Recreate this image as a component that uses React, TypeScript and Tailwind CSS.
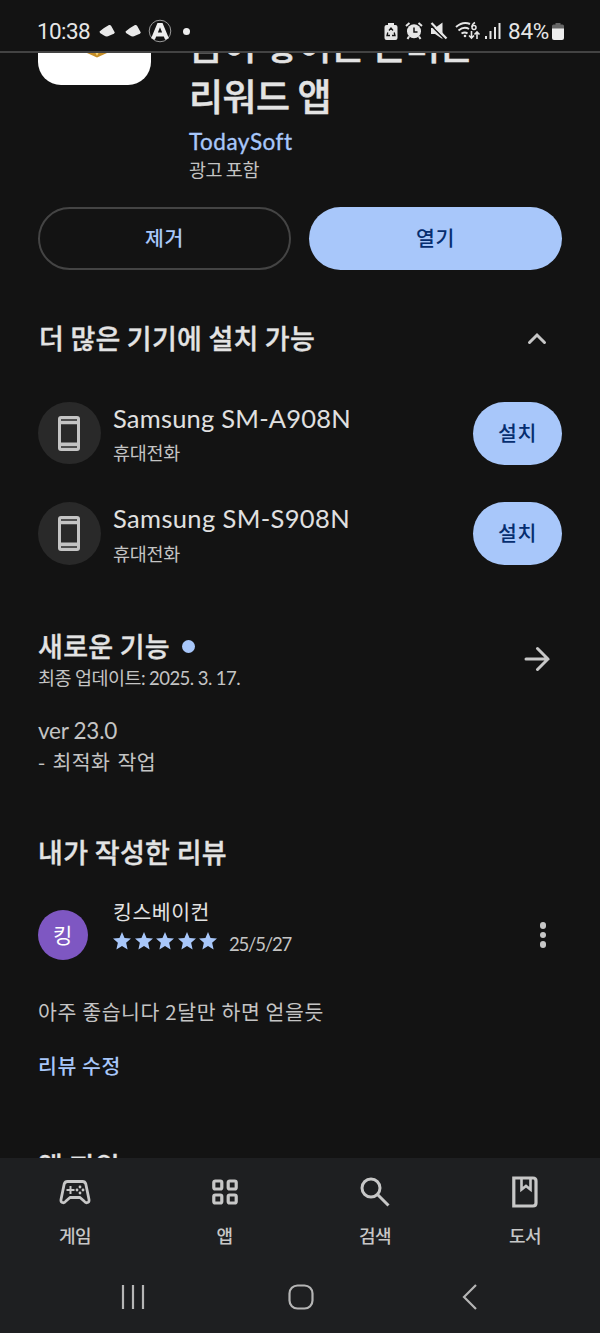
import React from "react";

const KR = "font-['Noto_Sans_CJK_KR',sans-serif]";
const LATIN = "font-['Lato','Noto_Sans_CJK_KR',sans-serif]";
const STATUS = "font-['Roboto',sans-serif] text-[22.5px] text-[#e6e6e6]";
const TITLE = `${KR} text-[37px] font-medium text-[#e3e3e3] [-webkit-text-stroke:0.5px_#e3e3e3]`;
const HEADING = `${KR} text-[27px] font-medium text-[#e3e3e3] [-webkit-text-stroke:0.35px_#e3e3e3]`;
const SMALL = `${KR} text-[18.5px] text-[#c4c4c4]`;
const BODY = `${KR} text-[20.5px] text-[#c4c4c4]`;
const LINK = `${KR} text-[20.5px] font-medium text-[#a8c7fa]`;
const ON_BLUE = `${KR} text-[20.5px] font-medium text-[#062e6f]`;

/* Text tracked so that its line takes exactly w pixels */
function Fit({ w, className, children }: { w: number; className: string; children: string }) {
  const ref = React.useRef<HTMLSpanElement>(null);
  React.useLayoutEffect(() => {
    const el = ref.current;
    if (!el) return;
    el.style.letterSpacing = "0px";
    const natural = el.getBoundingClientRect().width;
    el.style.letterSpacing = `${(w - natural) / children.length}px`;
  }, [w, children]);
  return <span ref={ref} className={`inline-block whitespace-pre leading-none ${className}`}>{children}</span>;
}

function Line({ children, className }: { children: React.ReactNode; className: string }) {
  return <div className={`flex shrink-0 items-center whitespace-nowrap ${className}`}>{children}</div>;
}

function Cloud({ className }: { className: string }) {
  return (
    <svg className={className} width="17" height="14" viewBox="0 0 17 14" fill="#e9e9e9">
      <path d="M0.500 7.500L5 4L10 1Q12 0.500 12.800 3L15.800 8.500Q15.500 9.800 13 10.500L9 12.300Q7 12.800 5 11.500L1 9Z" />
    </svg>
  );
}

function StatusBar() {
  return (
    <header className="flex h-[53px] shrink-0 items-start border-b-2 border-[#434343] pl-[37px] pr-[35px] pt-[15px]">
      <div className="flex h-8 items-center">
        <Fit w={53} className={STATUS}>10:38</Fit>
        <Cloud className="ml-[9px]" />
        <Cloud className="ml-[9px]" />
        <svg className="ml-[6px]" width="24" height="24" viewBox="0 0 24 24" fill="none">
          <circle cx="12" cy="12" r="10.800" stroke="#999" strokeWidth="1" />
          <path d="M5 20L10.800 6H13.200L19 20M8 15.500H16" stroke="#eee" strokeWidth="4" />
        </svg>
        <span className="ml-[11px] size-[7px] rounded-full bg-[#eee]" />
      </div>
      <div className="ml-auto flex h-8 items-center">
        <svg width="14" height="19" viewBox="0 0 14 19">
          <path d="M4 1h6v2h1.500a2 2 0 0 1 2 2v11a2 2 0 0 1-2 2h-9a2 2 0 0 1-2-2V5a2 2 0 0 1 2-2H4z" fill="#e6e6e6" />
          <path d="M5 8.500L7 6L9 8.500M3.800 10.500L3 13.500H6M8 13.500H11L10.200 10.500" fill="none" stroke="#151515" strokeWidth="1.300" />
        </svg>
        <svg className="ml-[7px]" width="18" height="18" viewBox="0 0 18 18">
          <circle cx="9" cy="9.300" r="7" fill="#e6e6e6" />
          <path d="M1 4L4.500 1M17 4L13.500 1M4 14.500L2.500 17M14 14.500L15.500 17" stroke="#e6e6e6" strokeWidth="2" />
          <path d="M9 5.500V10H12.500" stroke="#151515" strokeWidth="1.500" fill="none" />
        </svg>
        <svg className="ml-[7px]" width="18" height="18" viewBox="0 0 18 18">
          <path d="M1 6H5L12.500 0.500V17L5 12H1Z" fill="#e6e6e6" />
          <path d="M0 2.500L15 17.500" stroke="#151515" strokeWidth="1.500" />
          <path d="M1.500 1L16.500 16.500" stroke="#e6e6e6" strokeWidth="2.200" />
        </svg>
        <svg className="ml-[7px]" width="26" height="20" viewBox="0 0 26 20" fill="none" stroke="#e6e6e6" strokeWidth="2">
          <path d="M1 6Q8 0 15 3M3.500 9.500Q9 5 14 8M6.500 12.500Q10 10.500 12.500 12.500" />
          <circle cx="10" cy="15" r="1.300" fill="#e6e6e6" stroke="none" />
          <path d="M20 1.500Q17 3 17 6" strokeWidth="1.500" />
          <circle cx="19" cy="6.500" r="2" strokeWidth="1.500" />
          <path d="M16.500 10V17M14 14.500L16.500 17L19 14.500M22 18V11M19.500 13.500L22 11L24.500 13.500" strokeWidth="1.600" />
        </svg>
        <svg className="ml-[3px]" width="17" height="18" viewBox="0 0 17 18" stroke="#e6e6e6" strokeWidth="2">
          <path d="M2 14V17M6.500 9V17M11 5V17M15.500 1V17" />
        </svg>
        <span className="ml-[7px] flex"><Fit w={41} className={STATUS}>84%</Fit></span>
        <svg className="ml-[2px]" width="14" height="19" viewBox="0 0 14 19">
          <path d="M4.500 1h5v1.500h2a1.500 1.500 0 0 1 1.500 1.500V7H1V4a1.500 1.500 0 0 1 1.500-1.500h2z" fill="#666" />
          <path d="M1 6.500h12v9.500a2 2 0 0 1-2 2h-8a2 2 0 0 1-2-2z" fill="#eee" />
        </svg>
      </div>
    </header>
  );
}

function Device({ name, w }: { name: string; w: number }) {
  return (
    <div className="flex h-[63px] shrink-0 items-center px-[38px]">
      <div className="flex size-[62.5px] shrink-0 items-center justify-center rounded-full bg-[#292929]">
        <svg width="22" height="35" viewBox="0 0 22 35">
          <rect width="22" height="35" rx="3" fill="#c4c4c4" />
          <path d="M3 3.200H19V4.800H3ZM3 8.200H19V26.500H3ZM3 30.200H19V31.800H3Z" fill="#292929" />
        </svg>
      </div>
      <div className="ml-[12.5px] flex h-full flex-col">
        <Line className="h-[34px]"><Fit w={w} className={`${LATIN} text-[25.5px] text-[#e0e0e0]`}>{name}</Fit></Line>
        <Line className="mt-[1px] h-[32px]"><Fit w={67} className={SMALL}>휴대전화</Fit></Line>
      </div>
      <button className="ml-auto flex h-[63px] w-[89px] items-center justify-center rounded-full bg-[#a8c7fa] pb-[2px]">
        <Fit w={39} className={ON_BLUE}>설치</Fit>
      </button>
    </div>
  );
}

function Star() {
  return (
    <svg width="18" height="18" viewBox="0 0 17 17" fill="#a8c7fa">
      <path d="M8.500 0L10.900 5.600L17 6.100L12.400 10.200L13.800 16.500L8.500 13.200L3.200 16.500L4.600 10.200L0 6.100L6.100 5.600Z" />
    </svg>
  );
}

function Tab({ label, w, children }: { label: string; w: number; children: React.ReactNode }) {
  return (
    <div className="flex w-[150px] flex-col items-center">
      <div className="flex h-[34px] items-center">{children}</div>
      <div className="mt-[15px] flex h-[22px] items-center">
        <Fit w={w} className={`${KR} text-[18px] font-medium text-[#c7c7c7]`}>{label}</Fit>
      </div>
    </div>
  );
}

export default function App() {
  return (
    <div className="flex h-[1333px] w-[600px] flex-col overflow-hidden bg-[#131313]">
      <StatusBar />
      <main className="flex h-[1105px] shrink-0 flex-col overflow-hidden">
        <section className="flex h-[154px] shrink-0 items-start pl-[38px]">
          <div className="flex h-[32px] w-[113px] justify-center rounded-b-[23px] bg-white pl-1">
            <svg width="22" height="5" viewBox="0 0 22 5">
              <path d="M1 0H21L11 4.500Z" fill="#c58d25" />
              <path d="M9.500 0H12.500L11 3Z" fill="#f4d27a" />
            </svg>
          </div>
          <div className="ml-[38px] flex flex-col">
            <Line className="-mt-[31px] h-[44px]"><Fit w={284} className={TITLE}>금이 쌓이는 돈버는</Fit></Line>
            <Line className="mt-[1px] h-[56px]"><Fit w={142} className={TITLE}>리워드 앱</Fit></Line>
            <Line className="mt-[3px] h-[32px]">
              <Fit w={103} className={`${LATIN} text-[22.5px] text-[#a8c7fa] [-webkit-text-stroke:0.35px_#a8c7fa]`}>TodaySoft</Fit>
            </Line>
            <Line className="-mt-[2px] h-[26px]"><Fit w={70} className={SMALL}>광고 포함</Fit></Line>
          </div>
        </section>
        <section className="flex h-[63px] shrink-0 justify-between px-[38px]">
          <button className="flex w-[253px] items-center justify-center rounded-full border-2 border-[#444] pb-[2px]"><Fit w={39} className={LINK}>제거</Fit></button>
          <button className="flex w-[253px] items-center justify-center rounded-full bg-[#a8c7fa] pb-[2px]"><Fit w={39} className={ON_BLUE}>열기</Fit></button>
        </section>
        <section className="mt-[47px] flex h-10 shrink-0 items-center justify-between pl-[39px] pr-[53px]">
          <Fit w={276} className={HEADING}>더 많은 기기에 설치 가능</Fit>
          <svg className="mt-[2px]" width="20" height="14" viewBox="0 0 20 14" fill="none" stroke="#c7c7c7" strokeWidth="3" strokeLinecap="round"><path d="M2.500 11.500L10 4L17.500 11.500" /></svg>
        </section>
        <section className="mt-[44.5px] flex shrink-0 flex-col gap-[37.5px]">
          <Device name="Samsung SM-A908N" w={238} />
          <Device name="Samsung SM-S908N" w={237} />
        </section>
        <section className="mt-[62px] flex h-[64px] shrink-0 items-center justify-between pl-[38px] pr-[50px]">
          <div>
            <Line className="h-[38px]">
              <Fit w={132} className={`${HEADING} -mt-[2px]`}>새로운 기능</Fit>
              <span className="ml-3 size-[13px] rounded-full bg-[#a8c7fa]" />
            </Line>
            <Line className="h-[25px]"><Fit w={202} className={`${LATIN} text-[18.5px] text-[#c4c4c4]`}>최종 업데이트: 2025. 3. 17.</Fit></Line>
          </div>
          <svg width="26" height="26" viewBox="0 0 26 26" fill="none" stroke="#c7c7c7" strokeWidth="3" strokeLinecap="round"><path d="M2 13H24M13.500 2.500L24 13L13.500 23.500" /></svg>
        </section>
        <section className="mt-[24px] shrink-0 pl-[38px]">
          <Line className="h-[32px]"><Fit w={79} className={`${LATIN} text-[22.5px] text-[#c4c4c4]`}>ver 23.0</Fit></Line>
          <Line className="h-[29px]"><Fit w={118} className={`${KR} text-[20.5px] text-[#c4c4c4] [word-spacing:2px]`}>- 최적화 작업</Fit></Line>
        </section>
        <Line className="mt-[55px] h-[40px] pl-[38px]"><Fit w={189} className={HEADING}>내가 작성한 리뷰</Fit></Line>
        <section className="mt-[24px] flex h-[70px] shrink-0 items-center pl-[38px] pr-[53px]">
          <div className="mt-[10px] flex size-[50px] items-center justify-center rounded-full bg-[#7e57c2] pb-[2px]"><Fit w={20} className={`${KR} text-[21px] text-white`}>킹</Fit></div>
          <div className="ml-[25px] flex h-full flex-col">
            <Line className="h-[32px]"><Fit w={97} className={`${KR} text-[20.5px] text-[#e3e3e3]`}>킹스베이컨</Fit></Line>
            <div className="flex h-[32px] items-center">
              <div className="-mt-[4px] flex gap-[3.5px]"><Star /><Star /><Star /><Star /><Star /></div>
              <span className="ml-[12px] mt-[2px] flex"><Fit w={62} className={`${LATIN} text-[18.5px] text-[#c4c4c4]`}>25/5/27</Fit></span>
            </div>
          </div>
          <div className="ml-auto mt-[10px] flex w-[8px] flex-col items-center gap-[3px]">
            <i className="size-[6.5px] rounded-full bg-[#c7c7c7]" />
            <i className="size-[6.5px] rounded-full bg-[#c7c7c7]" />
            <i className="size-[6.5px] rounded-full bg-[#c7c7c7]" />
          </div>
        </section>
        <Line className="mt-[30px] h-[32px] pl-[38px]"><Fit w={286} className={BODY}>아주 좋습니다 2달만 하면 얻을듯</Fit></Line>
        <Line className="mt-[22px] h-[32px] pl-[38px]"><Fit w={83} className={LINK}>리뷰 수정</Fit></Line>
        <Line className="mt-[64px] h-[40px] pl-[38px]"><Fit w={82} className={HEADING}>앱 지원</Fit></Line>
      </main>
      <footer className="flex h-[175px] shrink-0 flex-col bg-[#1e1f21]">
        <nav className="mt-[17px] flex h-[80px]">
          <Tab label="게임" w={32}>
            <svg width="32" height="26" viewBox="0 0 32 26" fill="none" stroke="#c7c7c7">
              <path d="M8.500 2.500H23.500Q26 2.500 26.800 5L30 20.500Q30.500 23.500 28 23.700Q26.500 24 25 22L21 18.500H11L7 22Q5.500 24 4 23.700Q1.500 23.500 2 20.500L5.200 5Q6 2.500 8.500 2.500Z" strokeWidth="2.800" strokeLinejoin="round" />
              <path d="M11.500 7V15M7.500 11H15.500" strokeWidth="2" />
              <g fill="#c7c7c7" stroke="none"><circle cx="21" cy="8" r="1.400" /><circle cx="21" cy="14" r="1.400" /><circle cx="18" cy="11" r="1.400" /><circle cx="24" cy="11" r="1.400" /></g>
            </svg>
          </Tab>
          <Tab label="앱" w={17}>
            <svg width="26" height="26" viewBox="0 0 26 26" fill="none" stroke="#c7c7c7" strokeWidth="3.200">
              <rect x="1.800" y="2" width="8" height="8" rx="1.500" /><rect x="16.200" y="2" width="8" height="8" rx="1.500" /><rect x="1.800" y="16" width="8" height="8" rx="1.500" /><rect x="16.200" y="16" width="8" height="8" rx="1.500" />
            </svg>
          </Tab>
          <Tab label="검색" w={32}>
            <svg width="30" height="30" viewBox="0 0 30 30" fill="none" stroke="#c7c7c7" strokeWidth="3"><circle cx="11" cy="11" r="9" /><path d="M17.500 17.500L28.500 28.500" /></svg>
          </Tab>
          <Tab label="도서" w={32}>
            <svg width="26" height="32" viewBox="0 0 26 32" fill="none" stroke="#c7c7c7">
              <path d="M1.800 2H21Q24 2 24 5V27Q24 30 21 30H1.800Z" strokeWidth="3.200" />
              <path d="M9.500 2V13.500L14 10L18.500 13.500V2" strokeWidth="2.600" />
            </svg>
          </Tab>
        </nav>
        <div className="mt-[29px] flex h-[26px] items-center pl-[121px] pr-[122px]">
          <svg width="24" height="24" viewBox="0 0 24 24" stroke="#b5b5b5" strokeWidth="2.200"><path d="M2 0V24M12 0V24M22 0V24" /></svg>
          <svg className="ml-[143px]" width="26" height="26" viewBox="0 0 26 26" fill="none" stroke="#b5b5b5" strokeWidth="2.200"><rect x="1.500" y="1.500" width="23" height="23" rx="8" /></svg>
          <svg className="ml-auto" width="16" height="26" viewBox="0 0 16 26" fill="none" stroke="#b5b5b5" strokeWidth="2.200"><path d="M14 1L2 13L14 25" /></svg>
        </div>
      </footer>
    </div>
  );
}
